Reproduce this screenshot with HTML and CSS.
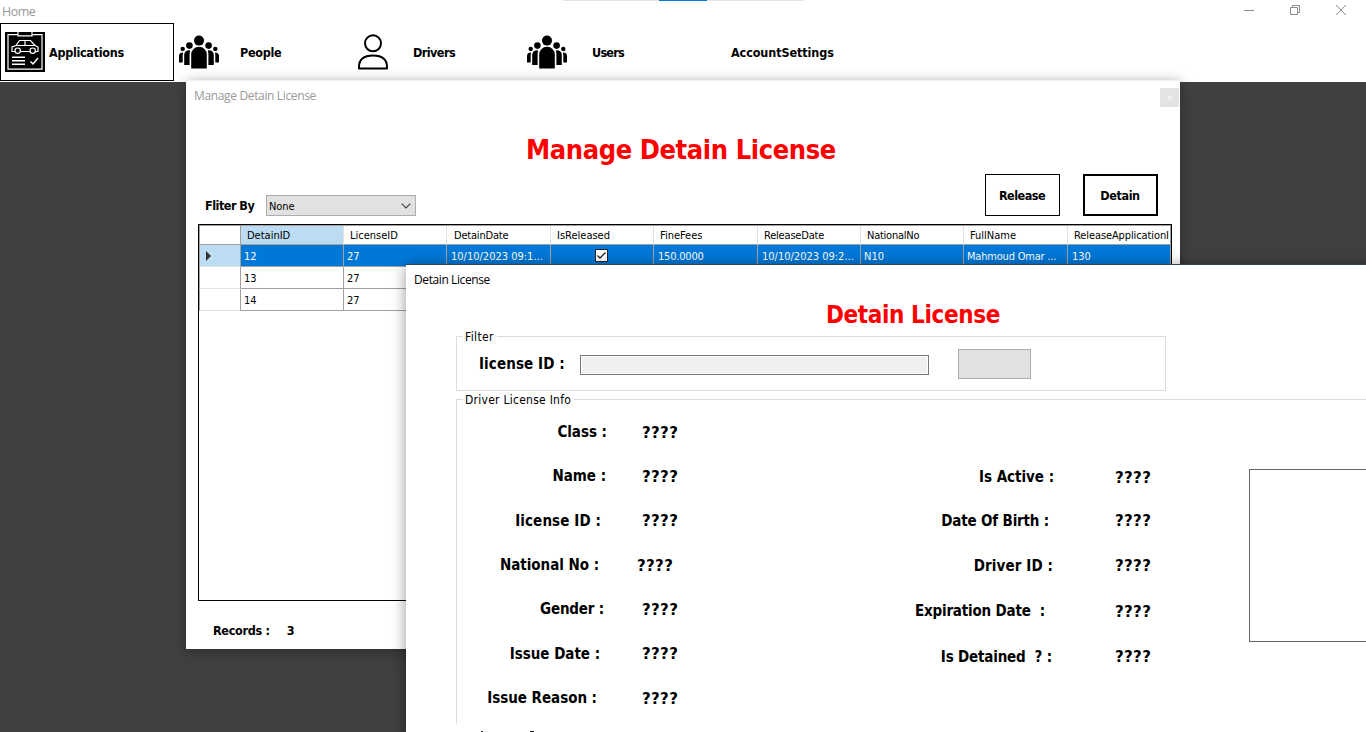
FILE: index.html
```html
<!DOCTYPE html>
<html lang="en">
<head>
<meta charset="utf-8">
<title>Home</title>
<link rel="stylesheet" href="styles.css">
</head>
<body>
<svg class="defs" width="0" height="0">
  <symbol id="group" viewBox="0 0 40 34">
    <circle cx="20" cy="5.6" r="5"/><circle cx="10.4" cy="10.6" r="3.3"/><circle cx="29.6" cy="10.6" r="3.3"/>
    <circle cx="3.7" cy="13.9" r="2.2"/><circle cx="36.3" cy="13.9" r="2.2"/>
    <path d="M12.200 33.500V19.500a7.800 7.800 0 0 1 15.600 0V33.500z"/>
    <path d="M5.200 30V19.500a4.600 4.600 0 0 1 6-4.100q-.6 1.900-.6 4V30zM34.800 30V19.500a4.600 4.600 0 0 0-6-4.100q.6 1.900.6 4V30z"/>
    <path d="M0 27.500V21q0-3.400 4-3.600L3.700 20v7.500zM40 27.500V21q0-3.400-4-3.600l.3 2.600v7.500z"/>
  </symbol>
</svg>
<div class="main">
  <header class="main-bar">
    <span class="main-title">Home</span>
    <div class="desk-tab"><i></i></div>
    <div class="sys">
      <svg width="10" height="10"><path d="M0 5.500h10"/></svg>
      <svg width="10" height="10"><path d="M.5 2.500h7v7h-7zM2.500 2.500v-2h7v7h-2"/></svg>
      <svg width="10" height="10"><path d="M0 0l10 10M10 0L0 10"/></svg>
    </div>
  </header>
  <nav class="menu">
    <div class="item active">
      <svg width="40" height="40" viewBox="0 0 40 40">
        <path d="M0 0h40v40H0z"/>
        <g fill="none" stroke="#fff" stroke-width="1.200">
          <path d="M12.500 2.600H3v34.600h34V2.600h-9.500M13 0v3.800h14V0"/>
          <path d="M10 19.500H7v-4.500l4-1.500 3.500-5h11l4.500 5 3 1.500v4.500H30M15.500 19.500h9.500M11 13.500h19M20 8.500v5"/>
          <circle cx="12.700" cy="18.700" r="2.700"/><circle cx="27.700" cy="18.700" r="2.700"/>
          <path d="M7 25.200h13M7 28.700h13M7 32.200h13M25.500 29.500l2.500 2.500 5-6" stroke-width="1.500"/>
        </g>
      </svg>
      <span class="m-app">Applications</span>
    </div>
    <div class="item people"><svg width="40" height="34"><use href="#group"/></svg><span>People</span></div>
    <div class="item drivers">
      <svg width="30" height="36" viewBox="0 0 30 36" fill="none" stroke="#000" stroke-width="2"><circle cx="15" cy="9.300" r="8"/><path d="M1 34.500v-1.500q0-11.500 14-11.500t14 11.500v1.500z" stroke-linejoin="round"/></svg>
      <span>Drivers</span>
    </div>
    <div class="item users"><svg width="40" height="34"><use href="#group"/></svg><span>Users</span></div>
    <div class="item account"><span>AccountSettings</span></div>
  </nav>
  <main class="desk"></main>

  <section class="win manage">
    <div class="win-bar"><span>Manage Detain License</span><b class="close"><svg width="5" height="5"><path d="M0 0l5 5M5 0L0 5"/></svg></b></div>
    <h1>Manage Detain License</h1>
    <div class="tools">
      <span class="f-label">Fliter By</span>
      <div class="combo"><span>None</span><svg width="10" height="6"><path d="M.7.7L5 5 9.300.7"/></svg></div>
      <button class="release">Release</button>
      <button class="detain">Detain</button>
    </div>
    <div class="grid">
      <div class="tr head"><i></i><span class="sel">DetainID</span><span>LicenseID</span><span class="t2">DetainDate</span><span>IsReleased</span><span>FineFees</span><span class="t2">ReleaseDate</span><span class="t4">NationalNo</span><span>FullName</span><span class="t3">ReleaseApplicationI</span></div>
      <div class="tr on"><i><svg width="6" height="10"><path d="M0 0l5 5-5 5z"/></svg></i><span>12</span><span>27</span><span>10/10/2023 09:1...</span><span class="check"><svg width="13" height="13"><path class="box" d="M.5.5h12v12H.5z"/><path class="tick" d="M2.500 6.500L5 9l5.500-5.500"/></svg></span><span class="fee">150.0000</span><span>10/10/2023 09:2...</span><span class="no">N10</span><span class="t3">Mahmoud Omar ...</span><span>130</span></div>
      <div class="tr"><i></i><span>13</span><span>27</span><span></span><span></span><span></span><span></span><span></span><span></span><span></span></div>
      <div class="tr"><i></i><span>14</span><span>27</span><span></span><span></span><span></span><span></span><span></span><span></span><span></span></div>
    </div>
    <div class="foot"><span>Records :</span><span>3</span></div>
  </section>

  <section class="win license">
    <div class="win-bar"><span>Detain License</span></div>
    <h2>Detain License</h2>
    <fieldset class="filter">
      <legend>Filter</legend>
      <div class="search"><label>Iicense ID :</label><div class="input"></div><div class="btn"></div></div>
    </fieldset>
    <fieldset class="info">
      <legend class="wide">Driver License Info</legend>
      <div class="cols">
        <div class="col left">
          <div class="row r0 down"><label>Class :</label><b>????</b></div>
          <div class="row r1"><label>Name :</label><b>????</b></div>
          <div class="row r6"><label class="plus">Iicense ID :</label><b>????</b></div>
          <div class="row r8 in down"><label>National No :</label><b>????</b></div>
          <div class="row r3"><label class="minus">Gender :</label><b>????</b></div>
          <div class="row r7"><label>Issue Date :</label><b>????</b></div>
          <div class="row r10"><label>Issue Reason :</label><b>????</b></div>
        </div>
        <div class="col right">
          <div class="row r0 down short"><label>Is Active :</label><b>????</b></div>
          <div class="row r5"><label class="minus">Date Of Birth :</label><b>????</b></div>
          <div class="row r1"><label class="plus">Driver ID :</label><b>????</b></div>
          <div class="row r9 down"><label class="minus">Expiration Date&nbsp; :</label><b>????</b></div>
          <div class="row r2 tall"><label class="minus">Is Detained&nbsp; ? :</label><b>????</b></div>
        </div>
        <div class="photo"></div>
      </div>
    </fieldset>
    <div class="peek"><i></i><i></i></div>
  </section>
</div>
</body>
</html>
```
FILE: styles.css
```css
* { box-sizing: border-box; }
body { margin: 0; color: #000; font-family: "DejaVu Sans Condensed", "DejaVu Sans", sans-serif; font-stretch: condensed; white-space: nowrap; }
.defs { position: absolute; }
.main { position: relative; width: 1366px; height: 732px; overflow: hidden; background: #fff; display: flex; flex-direction: column; }
.main-bar { display: flex; height: 23px; }
.main-title { width: 563px; padding-left: 2px; font: 12.5px/24px "Open Sans", sans-serif; letter-spacing: -.5px; color: #999; }
.desk-tab { width: 241px; height: 1px; background: #e4e4e4; padding-left: 96px; }
.desk-tab i { display: block; width: 48px; height: 1px; background: #0078d7; }
.sys { margin-left: auto; display: flex; gap: 36px; padding: 5px 20px 0 0; }
.sys svg { fill: none; stroke: #8c8c8c; overflow: visible; }

.menu { display: flex; height: 59px; align-items: flex-start; font-size: 12.5px; font-weight: bold; letter-spacing: -.3px; }
.item { display: flex; align-items: center; height: 58px; }
.item svg { display: block; flex: none; }
.active { width: 174px; border: 1px solid #000; padding-left: 4px; gap: 4px; }
.people { width: 184px; padding-left: 5px; gap: 21px; }
.drivers { width: 169px; gap: 25px; }
.users { width: 204px; gap: 25px; }
.drivers span { letter-spacing: -.55px; }
.users span { letter-spacing: -.75px; }
.account span { letter-spacing: -.1px; }
.desk { flex: 1; background: #404040; }

.win { position: absolute; background: #fff; display: flex; flex-direction: column; }
.win-bar { display: flex; font: 12px/20px "Open Sans", sans-serif; letter-spacing: -.35px; flex: none; }
.manage { left: 186px; top: 80px; width: 994px; height: 569px; border-top: 1px solid #f1f1f1; box-shadow: 0 2px 12px rgba(0,0,0,.35); }
.manage .win-bar { height: 45px; padding: 5px 0 0 8px; color: #999; }
.close { margin: 2px 1px 0 auto; width: 19px; height: 19px; background: #e3e3e3; display: flex; align-items: center; justify-content: center; }
.close svg { stroke: #f5f5f5; stroke-width: 1.2; }
h1 { margin: 0; height: 48px; padding-left: 340px; font-size: 27px; line-height: 48px; letter-spacing: -.4px; color: #f00; }
.tools { display: flex; height: 50px; font-size: 12.5px; font-weight: bold; align-items: flex-start; }
.f-label { width: 80px; padding: 23px 0 0 19px; line-height: 17px; letter-spacing: -.5px; }
.combo { width: 150px; height: 21px; margin: 21px 569px 0 0; border: 1px solid #adadad; background: #e1e1e1; display: flex; align-items: center; justify-content: space-between; padding: 0 4px 0 2px; font-size: 11px; font-weight: normal; letter-spacing: -.1px; }
.combo span { padding-top: 1px; }
.combo svg { fill: none; stroke: #444; stroke-width: 1.2; }
button { width: 75px; height: 42px; padding: 0 1px 0 0; background: #fff; border: 1px solid #000; font: inherit; letter-spacing: -.5px; color: #000; }
.detain { margin-left: 23px; border-width: 2px; letter-spacing: -.4px; }
.grid { width: 974px; height: 377px; margin-left: 12px; border: 1px solid #000; overflow: hidden; flex: none; font-size: 11px; }
.tr { display: grid; grid-template-columns: 42px 103px 103px 104px 103px 104px 103px 103px 104px 103px; height: 22px; width: 972px; }
.tr i { border-right: 1px solid #a0a0a0; border-bottom: 1px solid #e3e3e3; border-left: 1px solid #a0a0a0; }
.tr span { padding-left: 3px; line-height: 23px; border-right: 1px solid #a0a0a0; border-bottom: 1px solid #a0a0a0; overflow: hidden; height: 22px; }
.tr span:nth-child(n+4) { padding-left: 4px; }
.head { height: 20px; border-top: 1px solid #a0a0a0; }
.head span, .head i { height: 19px; line-height: 19px; border-bottom-color: #a0a0a0; border-right-color: #e3e3e3; }
.head span { padding-left: 6px; }
.head span:nth-child(n+4) { padding-left: 7px; }
.head span:nth-child(n+5) { padding-left: 6px; }
.head span:last-child, .tr span:last-child { border-right-color: #a0a0a0; }
.head i { border-right-color: #a0a0a0; }
.head .sel { background: #bcdcf4; }
.on i { background: #bcdcf4; display: flex; align-items: center; padding: 1px 0 0 6px; }
.on i svg { fill: #333; }
.on span { background: #0078d7; color: #fff; }
.on svg { flex: none; }
.tr.on .check { display: flex; align-items: center; justify-content: center; padding: 0 2px 0 0; }
.tr.on .no, .tr.on .t3 { padding-left: 3px; }
.box { fill: #fff; stroke: #222; }
.tick { fill: none; stroke: #222; stroke-width: 1.3; }
.head .t2 { letter-spacing: -.2px; }
.head .t3 { letter-spacing: -.1px; }
.head .t4 { letter-spacing: -.25px; }
.on .t3, .on .fee { letter-spacing: -.2px; }
.foot { display: flex; gap: 17px; padding: 21px 0 0 27px; font-size: 12.5px; line-height: 18px; font-weight: bold; letter-spacing: -.3px; }

.license { left: 406px; top: 264px; width: 968px; height: 476px; border-top: 1px solid #33434f; box-shadow: 0 2px 14px rgba(0,0,0,.42); }
.license .win-bar { height: 30px; padding: 5px 0 0 8px; letter-spacing: -.4px; }
h2 { margin: 0; height: 34px; padding-left: 420px; font-size: 24px; line-height: 40px; letter-spacing: -.38px; color: #f00; flex: none; }
fieldset { margin: 0 0 0 50px; border: 1px solid #dcdcdc; padding: 0 0 0 6px; min-width: 0; flex: none; }
legend { height: 15px; padding: 1px 3px 0 2px; font-size: 12px; line-height: 15px; letter-spacing: .35px; }
legend.wide { letter-spacing: .26px; }
.filter { width: 710px; height: 62px; }
.search { display: flex; align-items: center; height: 41px; padding-left: 16px; font-size: 15px; }
.search label { width: 101px; padding-bottom: 2px; letter-spacing: .1px; }
label, .row b { font-size: 15px; font-weight: bold; }
.input { width: 349px; height: 20px; border: 1px solid #7a7a7a; background: #f0f0f0; box-shadow: inset 0 0 0 1px #fff; margin-right: 29px; }
.btn { width: 73px; height: 30px; border: 1px solid #adadad; background: #e1e1e1; margin-bottom: 2px; }
.info { width: 960px; height: 332px; border-bottom: 0; margin-top: 1px; padding-left: 0; }
.info legend { margin-left: 6px; }
.cols { display: flex; }
.left { width: 243px; padding-top: 3px; }
.right { width: 549px; padding-top: 48px; }
.row { display: flex; height: 44.33px; align-items: center; }
.right .row { height: 45px; }
.right .short { height: 43px; }
.right .tall { height: 47px; }
.row label { text-align: right; letter-spacing: -.03px; }
.left label { width: 150px; margin-right: 35px; }
.right label { width: 354px; margin-right: 61px; }
.row b { font-family: "DejaVu Sans", sans-serif; font-stretch: normal; letter-spacing: .35px; padding-top: 1px; }
.row .plus { letter-spacing: .1px; }
.row .minus { letter-spacing: -.18px; }
.down b { padding-top: 2px; }
.in b { margin-left: -5px; }
.r1 label { padding-right: 1px; }
.r2 label { padding-right: 2px; }
.r3 label { padding-right: 3px; }
.r5 label { padding-right: 5px; }
.r6 label { padding-right: 6px; }
.r7 label { padding-right: 7px; }
.r8 label { padding-right: 8px; }
.r9 label { padding-right: 9px; }
.r10 label { padding-right: 10px; }
.photo { width: 160px; height: 173px; margin-top: 62px; border: 1px solid #646464; flex: none; }
.peek { display: flex; gap: 47px; padding: 7px 0 0 75px; }
.peek i { width: 2px; height: 1px; background: #222; }
.peek i + i { width: 4px; }
```
